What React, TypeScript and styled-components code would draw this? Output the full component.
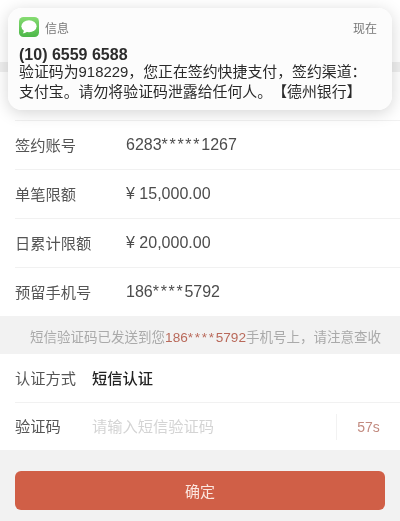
import styled, { createGlobalStyle } from "styled-components";

const cjk = `"Noto Sans CJK SC", "Liberation Sans", sans-serif`;

const GlobalStyle = createGlobalStyle`
  html, body {
    margin: 0;
    padding: 0;
    background: #f2f2f2;
  }
  body {
    font-family: "Liberation Sans", "Noto Sans CJK SC", sans-serif;
    text-spacing-trim: space-all;
  }
`;

const Page = styled.div`
  position: relative;
  width: 400px;
  height: 521px;
  overflow: hidden;
  background: #f2f2f2;
  filter: blur(0.35px);
`;

const TopBar = styled.div`
  height: 62px;
  background: #fff;
`;

const BandGap = styled.div`
  height: 10px;
  background: #efefef;
`;

const Section = styled.div`
  background: #fff;
  padding-left: 15px;
`;

const Row = styled.div<{ $last?: boolean; $height?: number }>`
  display: flex;
  align-items: center;
  height: ${(p) => p.$height ?? 48}px;
  border-bottom: ${(p) => (p.$last ? "none" : "1px solid #f1f1f1")};
`;

const Label = styled.div<{ $width?: number }>`
  width: ${(p) => p.$width ?? 111}px;
  flex-shrink: 0;
  padding-bottom: 3px;
  font-family: ${cjk};
  font-size: 15.25px;
  line-height: 20px;
  color: #555;
`;

const Value = styled.div`
  font-size: 16px;
  color: #4c4c4c;
`;

const StrongValue = styled.div`
  padding-bottom: 3px;
  font-family: ${cjk};
  font-size: 15.25px;
  line-height: 20px;
  font-weight: 500;
  color: #222;
`;

const Stars = styled.span`
  letter-spacing: 1.7px;
`;

const Hint = styled.div`
  height: 38px;
  box-sizing: border-box;
  padding: 3px 19px 0 0;
  line-height: 35px;
  text-align: right;
  font-family: ${cjk};
  font-size: 13.5px;
  color: #aaa;
  white-space: nowrap;
`;

const Phone = styled.span`
  font-family: "Liberation Sans", sans-serif;
  font-size: 13.6px;
  color: #b9695a;
`;

const Placeholder = styled.div`
  flex: 1;
  padding-bottom: 3px;
  font-family: ${cjk};
  font-size: 15.25px;
  line-height: 20px;
  color: #d4d4d4;
`;

const Countdown = styled.div`
  width: 63px;
  height: 26px;
  display: flex;
  align-items: center;
  justify-content: center;
  border-left: 1px solid #f2f2f2;
  font-size: 14px;
  color: #c28a7f;
`;

const ButtonWrap = styled.div`
  padding: 21px 15px 0;
`;

const Submit = styled.button`
  display: block;
  width: 100%;
  height: 39px;
  border: 0;
  border-radius: 6px;
  background: #d05f47;
  color: #fbe6df;
  font-family: ${cjk};
  font-size: 15px;
`;

const Notification = styled.div`
  position: absolute;
  top: 8px;
  left: 8px;
  width: 384px;
  height: 102px;
  box-sizing: border-box;
  padding: 9px 11px 0;
  border-radius: 14px;
  background: rgba(252, 252, 252, 0.98);
  box-shadow: 0 3px 16px rgba(0, 0, 0, 0.17);
`;

const NoticeHead = styled.div`
  display: flex;
  align-items: center;
  height: 20px;
  font-family: ${cjk};
  font-size: 12px;
  color: #777;
`;

const AppName = styled.span`
  flex: 1;
  margin-left: 6px;
`;

const NoticeTime = styled.span`
  margin-right: 4px;
`;

const Sender = styled.div`
  margin-top: 8px;
  font-size: 16px;
  line-height: 19px;
  font-weight: 700;
  color: #2c2c2c;
`;

const Body = styled.div`
  font-size: 14.9px;
  line-height: 20px;
  color: #2a2a2a;
  margin-top: -2px;
  white-space: nowrap;
`;

function MessagesIcon() {
  return (
    <svg width="20" height="20" viewBox="0 0 20 20">
      <defs>
        <linearGradient id="msg" x1="0" y1="0" x2="0" y2="1">
          <stop offset="0" stopColor="#86dc72" />
          <stop offset="1" stopColor="#4cb748" />
        </linearGradient>
      </defs>
      <rect width="20" height="20" rx="4.5" fill="url(#msg)" />
      <ellipse cx="10" cy="9.2" rx="7.6" ry="6" fill="#fff" />
      <path d="M5 12.5 C5 14.5 4.4 15.6 3.6 16.2 C5.6 16.2 7.2 15.4 8.2 14.4 Z" fill="#fff" />
    </svg>
  );
}

const MaskedPhone = () => (
  <>
    186<Stars>****</Stars>5792
  </>
);

export default function App() {
  return (
    <>
      <GlobalStyle />
      <Page>
        <TopBar />
        <BandGap />
        <Section>
          <Row />
          <Row>
            <Label>签约账号</Label>
            <Value>
              6283<Stars>*****</Stars>1267
            </Value>
          </Row>
          <Row>
            <Label>单笔限额</Label>
            <Value>¥ 15,000.00</Value>
          </Row>
          <Row>
            <Label>日累计限额</Label>
            <Value>¥ 20,000.00</Value>
          </Row>
          <Row $last>
            <Label>预留手机号</Label>
            <Value>
              <MaskedPhone />
            </Value>
          </Row>
        </Section>
        <Hint>
          短信验证码已发送到您
          <Phone>
            <MaskedPhone />
          </Phone>
          手机号上，请注意查收
        </Hint>
        <Section>
          <Row>
            <Label $width={77}>认证方式</Label>
            <StrongValue>短信认证</StrongValue>
          </Row>
          <Row $last $height={47}>
            <Label $width={77}>验证码</Label>
            <Placeholder>请输入短信验证码</Placeholder>
            <Countdown>57s</Countdown>
          </Row>
        </Section>
        <ButtonWrap>
          <Submit>确定</Submit>
        </ButtonWrap>
        <Notification>
          <NoticeHead>
            <MessagesIcon />
            <AppName>信息</AppName>
            <NoticeTime>现在</NoticeTime>
          </NoticeHead>
          <Sender>(10) 6559 6588</Sender>
          <Body>
            验证码为918229，您正在签约快捷支付，签约渠道：
            <br />
            支付宝。请勿将验证码泄露给任何人。【德州银行】
          </Body>
        </Notification>
      </Page>
    </>
  );
}
